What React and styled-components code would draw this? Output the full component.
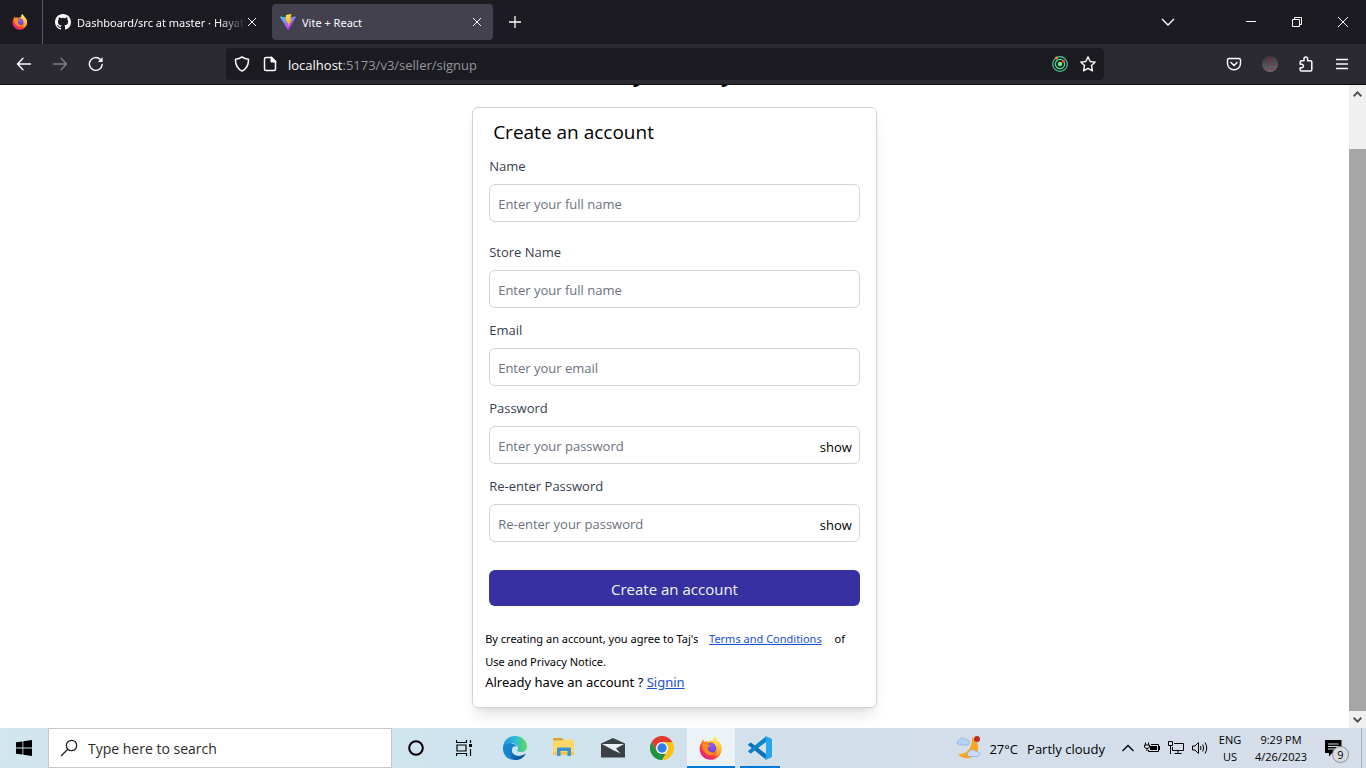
import React, { useState } from "react";
import styled, { createGlobalStyle } from "styled-components";

const GlobalStyle = createGlobalStyle`
  *, *::before, *::after { box-sizing: border-box; }
  html, body, #root { margin: 0; height: 100%; }
  body { font-family: "Open Sans", "Noto Sans", sans-serif; background: #fff; color: #000; overflow: hidden; }
  button, input { font: inherit; color: inherit; }
  button { border: 0; padding: 0; background: none; cursor: pointer; }
  svg { display: block; flex: none; }
`;

const Desktop = styled.div`
  display: flex;
  flex-direction: column;
  height: 100vh;
`;

/* ---------- browser chrome ---------- */
const TabStrip = styled.header`
  display: flex;
  align-items: center;
  height: 44px;
  flex: none;
  background: #1c1b22;
  color: #fbfbfe;
`;
const Pinned = styled.button`
  display: flex;
  align-items: center;
  justify-content: center;
  width: 43px;
  height: 44px;
  padding-right: 2px;
  border-right: 1px solid #5b5b66;
`;
const Tab = styled.div`
  display: flex;
  align-items: center;
  width: ${(p) => (p.$active ? 221 : 225)}px;
  height: 36px;
  margin-right: 4px;
  padding: 0 10px 0 ${(p) => (p.$active ? 8 : 12)}px;
  gap: 6px;
  border-radius: 4px;
  background: ${(p) => (p.$active ? "#42414d" : "transparent")};
  font-family: "Noto Sans", "Open Sans", sans-serif;
  font-size: 11px;
  line-height: 18px;
`;
const TabTitle = styled.span`
  flex: 1;
  min-width: 0;
  padding-top: 2px;
  margin-right: -6px;
  overflow: hidden;
  white-space: nowrap;
  ${(p) => p.$fade && "mask-image: linear-gradient(to right, #000 84%, transparent 100%);"}
`;
const TabClose = styled.button`
  display: flex;
  align-items: center;
  justify-content: center;
  width: 12px;
  height: 20px;
`;
const ChromeButton = styled.button`
  display: flex;
  align-items: center;
  justify-content: center;
  width: ${(p) => p.$w || 36}px;
  height: 36px;
  color: #fbfbfe;
  opacity: ${(p) => (p.disabled ? 0.4 : 1)};
`;
const WindowControls = styled.div`
  display: flex;
  margin-left: auto;
`;
const ListTabs = styled(ChromeButton)`
  margin-right: 42px;
`;
const Toolbar = styled.nav`
  display: flex;
  align-items: center;
  height: 41px;
  flex: none;
  padding: 0 6px;
  background: #2b2a33;
  border-bottom: 1px solid #0c0c0d;
`;
const ToolGroup = styled.div`
  display: flex;
`;
const UrlBar = styled.div`
  display: flex;
  align-items: center;
  flex: 1;
  height: 32px;
  margin: 0 112px;
  padding: 0 8px;
  gap: 10px;
  border-radius: 4px;
  background: #1c1b22;
  color: #fbfbfe;
`;
const UrlIcons = styled.div`
  display: flex;
  gap: 12px;
`;
const Url = styled.span`
  flex: 1;
  padding-top: 2px;
  font-size: 13px;
  line-height: 20px;
  color: #96959d;
  b { font-weight: 400; color: #fbfbfe; }
`;

/* ---------- page ---------- */
const Viewport = styled.div`
  display: flex;
  flex: 1;
  min-height: 0;
`;
const Page = styled.main`
  flex: 1;
  min-width: 0;
  overflow: hidden;
  display: flex;
  flex-direction: column;
  align-items: center;
  justify-content: flex-end;
  padding-bottom: 20px;
`;
const Brand = styled.h1`
  margin: 0 0 18px;
  font-size: 22px;
  line-height: 32px;
  font-weight: 700;
`;
const Card = styled.form`
  flex: none;
  width: 30%;
  min-width: 400px;
  padding: 10px 16px 15px;
  border: 1px solid #d1d5db;
  border-radius: 6px;
  background: #fff;
  box-shadow: 0 10px 15px -3px rgba(0, 0, 0, 0.1), 0 4px 6px -4px rgba(0, 0, 0, 0.1);
`;
const CardTitle = styled.h2`
  margin: 0 0 10px 4px;
  font-size: 19px;
  line-height: 28px;
  font-weight: 400;
`;
const Field = styled.div`
  display: flex;
  flex-direction: column;
  gap: 8px;
  margin-bottom: ${(p) => (p.$spaced ? 20 : 12)}px;
`;
const Label = styled.label`
  font-size: 13px;
  line-height: 20px;
  color: #374151;
`;
const InputShell = styled.div`
  display: flex;
  align-items: center;
  height: 38px;
  padding: 2px 7px 0 8px;
  border: 1px solid #d1d5db;
  border-radius: 6px;
`;
const Input = styled.input`
  flex: 1;
  min-width: 0;
  height: 24px;
  padding: 0;
  border: 0;
  outline: 0;
  background: none;
  font-size: 13px;
  &::placeholder { color: #6b7280; opacity: 1; }
`;
const Reveal = styled.button`
  padding-top: 2px;
  font-size: 13px;
  line-height: 20px;
`;
const Submit = styled.button`
  display: block;
  width: 100%;
  height: 36px;
  margin: 28px 0 21px;
  padding-top: 2px;
  border-radius: 6px;
  background: #3730a3;
  color: #f3f4f6;
  font-size: 15px;
  line-height: 24px;
`;
const Note = styled.p`
  margin: 0 0 0 -4px;
  font-family: "Noto Sans", "Open Sans", sans-serif;
  font-size: ${(p) => (p.$small ? 11 : 13)}px;
  line-height: ${(p) => (p.$small ? 23 : 19)}px;
`;
const TextLink = styled.a`
  color: #1d4ed8;
  text-decoration: underline;
  margin: ${(p) => (p.$wide ? "0 10px 0 8px" : "0")};
`;
const Scrollbar = styled.div`
  display: flex;
  flex-direction: column;
  width: 17px;
  background: #f0f0f0;
`;
const ScrollArrow = styled.button`
  display: flex;
  align-items: center;
  justify-content: center;
  height: 17px;
  flex: none;
`;
const ScrollTrack = styled.div`
  display: grid;
  grid-template-rows: 1fr 12fr;
  flex: 1;
`;
const ScrollThumb = styled.div`
  grid-row: 2;
  background: #a6a6a6;
`;

/* ---------- taskbar ---------- */
const Taskbar = styled.footer`
  display: flex;
  height: 40px;
  flex: none;
  background: linear-gradient(to right, #d0e7ee, #cfe4ee 40%, #d3dfeb 62%, #d5dde9);
`;
const TaskButton = styled.button`
  display: flex;
  align-items: center;
  justify-content: center;
  width: 48px;
  height: 40px;
  background: ${(p) => (p.$active ? "#ebf3f7" : "none")};
  box-shadow: ${(p) => (p.$active ? "inset 0 -2px #0078d7" : "none")};
`;
const OpenTask = styled(TaskButton)`
  width: 40px;
  margin: 0 4px;
  box-shadow: inset 0 -2px #0078d7;
`;
const SearchBox = styled.label`
  display: flex;
  align-items: center;
  gap: 10px;
  width: 344px;
  padding: 0 11px;
  border: 1px solid #c6c8ca;
  background: #fff;
`;
const SearchInput = styled.input`
  flex: 1;
  min-width: 0;
  padding: 0;
  border: 0;
  outline: 0;
  font-size: 14px;
  &::placeholder { color: #2b2b2b; opacity: 1; }
`;
const Apps = styled.div`
  display: flex;
  gap: 1px;
  margin-left: 3px;
`;
const Tray = styled.div`
  display: flex;
  align-items: center;
  margin-left: auto;
  padding-right: 4px;
`;
const Weather = styled.button`
  display: flex;
  align-items: center;
  gap: 9px;
  margin-right: 11px;
  font-size: 13px;
  line-height: 20px;
`;
const WeatherText = styled.span`
  padding-top: 2px;
`;
const TrayButton = styled.button`
  display: flex;
  align-items: center;
  justify-content: center;
  width: 24px;
  height: 40px;
`;
const TrayText = styled.button`
  width: ${(p) => p.$w}px;
  font-size: 11px;
  line-height: 17px;
  text-align: center;
`;
const Notices = styled.button`
  position: relative;
  display: flex;
  align-items: center;
  width: 48px;
  height: 40px;
  padding-left: 11px;
  border-right: 1px solid #a9b3bd;
`;
const Badge = styled.span`
  position: absolute;
  left: 18px;
  top: 18px;
  width: 17px;
  height: 17px;
  border: 1px solid #8a8f94;
  border-radius: 50%;
  background: #d9dcdf;
  font-size: 11px;
  line-height: 15px;
  text-align: center;
`;

/* ---------- icons ---------- */
const Line = ({ w = 16, h = w, box, sw = 1, children, ...rest }) => (
  <svg width={w} height={h} viewBox={box || `0 0 ${w} ${h}`} fill="none" stroke="currentColor" strokeWidth={sw} {...rest}>
    {children}
  </svg>
);

const Firefox = ({ size, id }) => (
  <svg width={size} height={size} viewBox="0 0 24 24">
    <defs>
      <linearGradient id={`${id}a`} x1="0.85" y1="0.1" x2="0.2" y2="0.95">
        <stop offset="0" stopColor="#fff44f" />
        <stop offset="0.35" stopColor="#ffa71f" />
        <stop offset="0.65" stopColor="#ff4b3a" />
        <stop offset="1" stopColor="#e31587" />
      </linearGradient>
      <radialGradient id={`${id}b`} cx="0.6" cy="0.3" r="0.8">
        <stop offset="0" stopColor="#9059ff" />
        <stop offset="1" stopColor="#5b3bc4" />
      </radialGradient>
      <linearGradient id={`${id}c`} x1="0.5" y1="0" x2="0.5" y2="1">
        <stop offset="0" stopColor="#fff36b" />
        <stop offset="1" stopColor="#ff9a20" />
      </linearGradient>
    </defs>
    <path fill={`url(#${id}a)`} d="M2.2 7.2 C2.6 5.6 3.5 4.2 4.3 3.6 C4.4 4.6 4.8 5.3 5.2 5.8 C6.6 5.2 8 5.3 9 5.9 C11 4.5 13.5 4.7 14.2 4.9 C13.8 2.8 14.6 1 16 0 C16.2 2.7 19.3 4.3 21 7 C23.2 10.2 23.4 14.4 21.3 18 C19.3 21.6 15.7 23.8 11.8 23.8 C5.4 23.8 0.5 18.9 0.6 12.5 C0.6 10.6 1.2 8.6 2.2 7.2Z" />
    <circle cx="12" cy="12" r="5.2" fill={`url(#${id}b)`} />
    <path fill={`url(#${id}c)`} d="M14.2 4.9 C13.8 2.8 14.6 1 16 0 C16.2 2.7 19.3 4.3 21 7 C22.8 9.8 22.8 13.6 21 16 C20.6 18.4 17.8 20 15.6 19.8 C18.4 18 19.2 14.6 17.8 11.6 C16.6 9 14.9 8 14.2 4.9Z" />
    <path fill="#ff8a1f" d="M3.4 7.6 C5 5.4 8 5 9 5.9 C8.6 6.8 8.6 7.8 9 8.6 C10 8.9 11.2 8.8 11.8 9 C11.4 10 10 10.2 9.2 11.2 C8.4 12.8 9 14.6 10.6 15.6 C12.4 16.8 14.6 17 16.4 16.4 C14.6 19.6 10 19.8 7 17.4 C4 15 2.8 11.2 3.4 7.6Z" />
  </svg>
);

const Github = () => (
  <svg width="16" height="16" viewBox="0 0 16 16" fill="#fbfbfe">
    <path d="M8 0C3.58 0 0 3.58 0 8c0 3.54 2.29 6.53 5.47 7.59.4.07.55-.17.55-.38 0-.19-.01-.82-.01-1.49-2.01.37-2.53-.49-2.69-.94-.09-.23-.48-.94-.82-1.13-.28-.15-.68-.52-.01-.53.63-.01 1.08.58 1.23.82.72 1.21 1.87.87 2.33.66.07-.52.28-.87.51-1.07-1.78-.2-3.64-.89-3.64-3.95 0-.87.31-1.59.82-2.15-.08-.2-.36-1.02.08-2.12 0 0 .67-.21 2.2.82a7.6 7.6 0 0 1 4 0c1.53-1.04 2.2-.82 2.2-.82.44 1.1.16 1.92.08 2.12.51.56.82 1.27.82 2.15 0 3.07-1.87 3.75-3.65 3.95.29.25.54.73.54 1.48 0 1.07-.01 1.93-.01 2.2 0 .21.15.46.55.38A8 8 0 0 0 16 8c0-4.42-3.58-8-8-8z" />
  </svg>
);

const Vite = () => (
  <svg width="16" height="16" viewBox="0 0 32 32">
    <defs>
      <linearGradient id="viteBody" x1="0" y1="0" x2="0.55" y2="0.9">
        <stop offset="0" stopColor="#41d1ff" />
        <stop offset="1" stopColor="#bd34fe" />
      </linearGradient>
      <linearGradient id="viteBolt" x1="0.4" y1="0" x2="0.6" y2="1">
        <stop offset="0" stopColor="#ffea83" />
        <stop offset="0.1" stopColor="#ffdd35" />
        <stop offset="1" stopColor="#ffa800" />
      </linearGradient>
    </defs>
    <path fill="url(#viteBody)" d="M31.9 6.2 L17 31.3 C16.7 31.9 15.6 31.9 15.3 31.3 L.1 6.2 C-.2 5.6 .3 4.8 1.1 4.9 L16 7.5 L30.9 4.9 C31.7 4.8 32.2 5.5 31.9 6.2Z" />
    <path fill="url(#viteBolt)" d="M23 .1 L12 2.2 L11.2 14 L14.3 13.5 L13.3 18 L16.2 17.3 L15 26.5 L23.7 10.4 L20.2 11Z" />
  </svg>
);

const Cross = ({ s = 10 }) => (
  <Line w={s} sw={1}><path d={`M1 1L${s - 1} ${s - 1}M${s - 1} 1L1 ${s - 1}`} /></Line>
);
const Back = () => (
  <Line sw={1.4} strokeLinecap="round" strokeLinejoin="round"><path d="M14.5 8H1.5M7 2.3L1.5 8L7 13.7" /></Line>
);
const Forward = () => (
  <Line sw={1.4} strokeLinecap="round" strokeLinejoin="round"><path d="M1.5 8H14.5M9 2.3L14.5 8L9 13.7" /></Line>
);
const Reload = () => (
  <Line sw={1.4} strokeLinecap="round">
    <path d="M14.2 8.4A6.4 6.4 0 1 1 12.4 3.5" />
    <path d="M14.6 1.2V6H9.8Z" fill="currentColor" stroke="none" />
  </Line>
);
const Shield = () => (
  <Line sw={1.5} strokeLinejoin="round">
    <path d="M8 .9C9.8 2.3 12 3 14.5 3.2C14.7 8.4 13 12.4 8 15.1C3 12.4 1.3 8.4 1.5 3.2C4 3 6.2 2.3 8 .9Z" />
  </Line>
);
const Doc = () => (
  <Line sw={1.5} strokeLinejoin="round">
    <path d="M9.5 1.5H4Q2.5 1.5 2.5 3V13Q2.5 14.5 4 14.5H12Q13.5 14.5 13.5 13V5.5Z" />
    <path d="M9.3 1.3V5.7H13.7Z" fill="currentColor" />
  </Line>
);
const Radar = () => (
  <svg width="16" height="16" viewBox="0 0 16 16" fill="none" stroke="#42c79b" strokeWidth="1.2">
    <circle cx="8" cy="8" r="7.3" />
    <circle cx="8" cy="8" r="4.6" stroke="#4fe08c" />
    <circle cx="8" cy="8" r="2.2" fill="#62f58b" stroke="none" />
    <circle cx="4.5" cy="1.9" r="1.5" fill="#f58a2c" stroke="none" />
    <circle cx="11.5" cy="5.2" r="1.5" fill="#f0502c" stroke="none" />
  </svg>
);
const Star = () => (
  <Line sw={1.4} strokeLinejoin="round">
    <path d="M8 .9L10.2 5.5L15.2 6.1L11.5 9.6L12.5 14.8L8 12.3L3.5 14.8L4.5 9.6L.8 6.1L5.8 5.5Z" />
  </Line>
);
const Pocket = () => (
  <Line sw={1.4} strokeLinecap="round" strokeLinejoin="round">
    <path d="M3 2.5H13Q14.5 2.5 14.5 4V7.5A6.5 6.3 0 0 1 1.5 7.5V4Q1.5 2.5 3 2.5Z" />
    <path d="M5 6.5L8 9.4L11 6.5" />
  </Line>
);
const DarkOrb = () => (
  <svg width="16" height="16" viewBox="0 0 16 16">
    <defs>
      <linearGradient id="orb" x1="0" y1="0" x2="0.2" y2="1">
        <stop offset="0" stopColor="#34343b" />
        <stop offset="1" stopColor="#65656c" />
      </linearGradient>
    </defs>
    <circle cx="8" cy="8" r="8" fill="url(#orb)" />
    <path d="M4 2Q7 4 9 3M10 3Q6 7 9 8T14 9.5M5 13H7M8 13H12" stroke="#8b2a36" fill="none" />
  </svg>
);
const Puzzle = () => (
  <Line sw={1.5} strokeLinejoin="round">
    <path d="M6 4.7V2.8A1.8 1.8 0 0 1 9.6 2.8V4.7H12.6Q13.8 4.7 13.8 6V13.8Q13.8 15 12.6 15H3.4Q2.2 15 2.2 13.8V11.8H3.6A1.8 1.8 0 0 0 3.6 8.2H2.2V6Q2.2 4.7 3.4 4.7Z" />
  </Line>
);
const Menu = () => (
  <Line w={14} sw={1.4}><path d="M1 2.5H13M1 7H13M1 11.5H13" /></Line>
);

const Windows = () => (
  <svg width="16" height="16" viewBox="0 0 16 16">
    <path d="M0 2.3L6.5 1.4V7.6H0ZM7.3 1.3L16 0V7.6H7.3ZM0 8.4H6.5V14.6L0 13.7ZM7.3 8.4H16V16L7.3 14.7Z" />
  </svg>
);
const Magnifier = () => (
  <Line w={18} sw={1.3} stroke="#222"><circle cx="11.5" cy="6.5" r="5.2" /><path d="M7.8 10.2L1 17" /></Line>
);
const TaskView = () => (
  <Line w={16} h={16} stroke="#000" sw={1.2}>
    <path d="M.5 0V2.5H10.5V0M.5 16V13.5H10.5V16M1 5H10V11H1ZM14.5 0V3M14.5 9V16" />
    <rect x="13" y="4" width="3" height="3" fill="#000" stroke="none" />
  </Line>
);
const Edge = () => (
  <svg width="24" height="24" viewBox="0 0 24 24">
    <defs>
      <linearGradient id="edgeTop" x1="0" y1="0.4" x2="1" y2="0.4">
        <stop offset="0" stopColor="#2593dc" />
        <stop offset="0.5" stopColor="#2bb9d8" />
        <stop offset="1" stopColor="#62dc5c" />
      </linearGradient>
      <linearGradient id="edgeLow" x1="0" y1="0" x2="0.9" y2="1">
        <stop offset="0" stopColor="#1b8fd8" />
        <stop offset="1" stopColor="#0c4a91" />
      </linearGradient>
    </defs>
    <path fill="url(#edgeTop)" d="M0 11C.7 4.5 5.8 0 12 0C19 0 24 5 24 10.5C24 14 21.3 16 18 16C15.5 16 14 15.2 14.2 14.2C14.5 13.5 15 13 15 11.8C14.6 8.5 10.5 6.6 6.8 7C3.5 7.3 1 9 0 11Z" />
    <path fill="#1786d2" d="M0 11C1 8.3 4 6.8 7 7C10.5 7.2 13 8.8 14 10.5C10.5 9.5 8 11.8 8 15C8 19 11 22.5 15.2 23.3C7.5 25.8-.8 20.5 0 11Z" />
    <path fill="url(#edgeLow)" d="M10.3 10.7C8 13.5 8.7 17 11.5 18.8C14.5 20.7 19 20 22 17.7C22.5 17.5 22.7 18 22.4 18.4C20 22 16.5 24 12.5 24C8.5 23 6.3 19.5 6.5 16C6.7 13.3 8 11.5 10.3 10.7Z" />
  </svg>
);
const Explorer = () => (
  <svg width="22" height="20" viewBox="0 0 22 20">
    <path fill="#dfa321" d="M0 1Q0 0 1 0H9L11 2.5H0Z" />
    <path fill="#ffd869" d="M0 3H10L11.5 1.5H20Q21 1.5 21 2.5V17H0Z" />
    <path fill="#f8c64d" d="M0 14H21V17H0Z" />
    <path fill="#3b93d6" d="M4 10.5Q4 9.5 5 9.5H17Q18 9.5 18 10.5V18H14.5V13H7.5V18H4Z" />
  </svg>
);
const Mail = () => (
  <svg width="24" height="20" viewBox="0 0 24 20">
    <path fill="#3b4044" d="M0 5.5L12 0L24 5.5V19.5H0Z" />
    <path fill="#e8f1f5" d="M1 6H23L15 10.5L19.5 15.5L11.5 11.8Z" />
  </svg>
);
const Chrome = () => (
  <svg width="24" height="24" viewBox="0 0 24 24">
    <path fill="#e33b2e" d="M1.6 6A12 12 0 0 1 22.4 6H12L6.8 15Z" />
    <path fill="#fbc116" d="M22.4 6A12 12 0 0 1 12 24L17.2 15L12 6Z" />
    <path fill="#229342" d="M12 24A12 12 0 0 1 1.6 6L6.8 15L12 18H15.5Z" />
    <circle cx="12" cy="12" r="6" fill="#fff" />
    <circle cx="12" cy="12" r="4.7" fill="#2f7de9" />
  </svg>
);
const Code = () => (
  <svg width="24" height="24" viewBox="0 0 24 24">
    <path fill="#0a6fb8" d="M.4 8.2L2 6.7Q2.5 6.3 3.1 6.7L18 18V23.5L.4 9.3Q-.1 8.8.4 8.2Z" />
    <path fill="#0a84cf" d="M.4 15.8L2 17.3Q2.5 17.7 3.1 17.3L18 6V.5L.4 14.7Q-.1 15.2.4 15.8Z" />
    <path fill="#27a5ef" d="M17.2 23.7Q18 24 18.7 23.6L23.3 21.4Q24 21 24 20.2V3.8Q24 3 23.3 2.6L18.7.4Q18 0 17.2.3L18 6V18Z" />
  </svg>
);
const WeatherIcon = () => (
  <svg width="24" height="24" viewBox="0 0 24 24">
    <path fill="#f7a521" d="M16 1C21 5 24 10 21 16C17 23 8 25 2 18C10 19 17 12 16 1Z" />
    <path fill="#b8d2f5" stroke="#86aee4" strokeWidth="0.7" d="M3 9A2.7 2.7 0 0 1 3 4A4 4 0 0 1 10 4A2.6 2.6 0 0 1 12 9Z" />
    <path fill="#c8dcf8" stroke="#86aee4" strokeWidth="0.7" d="M13 20.5A2.7 2.7 0 0 1 13 15.5A4.3 4.3 0 0 1 20 15.5A2.6 2.6 0 0 1 22 20.5Z" />
    <circle cx="21" cy="3" r="3" fill="#c42b1c" />
  </svg>
);
const Battery = () => (
  <Line w={16} h={12} stroke="#000">
    <path d="M7 2.5H14.5V9.5H4.5V8M15.5 4V8M.5 3H5.5V5Q5 6.5 3 6.5Q1 6.5.5 5ZM1.5 .5V3M4.5 .5V3M3 6.5V9" />
    <rect x="6" y="4" width="7" height="4" fill="#000" stroke="none" />
  </Line>
);
const Network = () => (
  <Line w={16} h={14} stroke="#000">
    <path d="M6 2.5H15.5V9.5H4.5V6M10 9.5V12.5M6.5 12.5H13.5M.5.5H4.5V4.5H.5ZM2.5 4.5V13" />
  </Line>
);
const Volume = () => (
  <Line w={16} h={14} stroke="#000">
    <path d="M.5 5H3L6.5 1.5V12.5L3 9H.5ZM8.5 5Q9.5 7 8.5 9M10.7 3.5Q12.7 7 10.7 10.5M13 1.5Q16.5 7 13 12.5" />
  </Line>
);

function PasswordField({ id, label, placeholder }) {
  const [shown, setShown] = useState(false);
  return (
    <Field>
      <Label htmlFor={id}>{label}</Label>
      <InputShell>
        <Input id={id} type={shown ? "text" : "password"} placeholder={placeholder} />
        <Reveal type="button" onClick={() => setShown(!shown)}>{shown ? "hide" : "show"}</Reveal>
      </InputShell>
    </Field>
  );
}

function TextField({ id, label, placeholder, type = "text", spaced }) {
  return (
    <Field $spaced={spaced}>
      <Label htmlFor={id}>{label}</Label>
      <InputShell>
        <Input id={id} type={type} placeholder={placeholder} />
      </InputShell>
    </Field>
  );
}

export default function App() {
  return (
    <Desktop>
      <GlobalStyle />
      <TabStrip>
        <Pinned aria-label="Firefox View"><Firefox size={16} id="ffTab" /></Pinned>
        <Tab>
          <Github />
          <TabTitle $fade>Dashboard/src at master · Hayat</TabTitle>
          <TabClose aria-label="Close tab"><Cross /></TabClose>
        </Tab>
        <Tab $active>
          <Vite />
          <TabTitle>Vite + React</TabTitle>
          <TabClose aria-label="Close tab"><Cross /></TabClose>
        </Tab>
        <ChromeButton aria-label="New tab"><Line w={12} sw={1.3}><path d="M6 0V12M0 6H12" /></Line></ChromeButton>
        <WindowControls>
          <ListTabs aria-label="List all tabs"><Line w={14} h={8} sw={1.4}><path d="M1 1L7 7L13 1" /></Line></ListTabs>
          <ChromeButton $w={46} aria-label="Minimize"><Line w={10}><path d="M0 4.5H10" /></Line></ChromeButton>
          <ChromeButton $w={46} aria-label="Restore"><Line w={10}><path d="M.5 2.5H7.5V9.5H.5ZM2.5 2.5V.5H9.5V7.5H7.5" /></Line></ChromeButton>
          <ChromeButton $w={46} aria-label="Close"><Cross s={12} /></ChromeButton>
        </WindowControls>
      </TabStrip>
      <Toolbar>
        <ToolGroup>
          <ChromeButton aria-label="Back"><Back /></ChromeButton>
          <ChromeButton aria-label="Forward" disabled><Forward /></ChromeButton>
          <ChromeButton aria-label="Reload"><Reload /></ChromeButton>
        </ToolGroup>
        <UrlBar>
          <UrlIcons><Shield /><Doc /></UrlIcons>
          <Url><b>localhost</b>:5173/v3/seller/signup</Url>
          <UrlIcons><Radar /><Star /></UrlIcons>
        </UrlBar>
        <ToolGroup>
          <ChromeButton aria-label="Pocket"><Pocket /></ChromeButton>
          <ChromeButton aria-label="Add-on"><DarkOrb /></ChromeButton>
          <ChromeButton aria-label="Extensions"><Puzzle /></ChromeButton>
          <ChromeButton aria-label="Menu"><Menu /></ChromeButton>
        </ToolGroup>
      </Toolbar>

      <Viewport>
        <Page>
          <Brand>Buy Factory !</Brand>
          <Card onSubmit={(e) => e.preventDefault()}>
            <CardTitle>Create an account</CardTitle>
            <TextField id="name" label="Name" placeholder="Enter your full name" spaced />
            <TextField id="store" label="Store Name" placeholder="Enter your full name" />
            <TextField id="email" label="Email" type="email" placeholder="Enter your email" />
            <PasswordField id="password" label="Password" placeholder="Enter your password" />
            <PasswordField id="repassword" label="Re-enter Password" placeholder="Re-enter your password" />
            <Submit type="submit">Create an account</Submit>
            <Note $small>
              By creating an account, you agree to Taj's <TextLink $wide href="#terms">Terms and Conditions</TextLink> of Use and Privacy Notice.
            </Note>
            <Note>Already have an account ? <TextLink href="#signin">Signin</TextLink></Note>
          </Card>
        </Page>
        <Scrollbar>
          <ScrollArrow aria-label="Scroll up"><Line w={9} h={6} sw={2} stroke="#505050"><path d="M.7 5.2L4.5 1.4L8.3 5.2" /></Line></ScrollArrow>
          <ScrollTrack><ScrollThumb /></ScrollTrack>
          <ScrollArrow aria-label="Scroll down"><Line w={9} h={6} sw={2} stroke="#505050"><path d="M.7.8L4.5 4.6L8.3.8" /></Line></ScrollArrow>
        </Scrollbar>
      </Viewport>

      <Taskbar>
        <TaskButton aria-label="Start"><Windows /></TaskButton>
        <SearchBox>
          <Magnifier />
          <SearchInput aria-label="Search" placeholder="Type here to search" />
        </SearchBox>
        <TaskButton aria-label="Cortana"><Line w={16} sw={2} stroke="#000"><circle cx="8" cy="8" r="6.8" /></Line></TaskButton>
        <TaskButton aria-label="Task view"><TaskView /></TaskButton>
        <Apps>
          <TaskButton aria-label="Edge"><Edge /></TaskButton>
          <TaskButton aria-label="File Explorer"><Explorer /></TaskButton>
          <TaskButton aria-label="Mail"><Mail /></TaskButton>
          <TaskButton aria-label="Chrome"><Chrome /></TaskButton>
          <TaskButton aria-label="Firefox" $active><Firefox size={24} id="ffTask" /></TaskButton>
          <OpenTask aria-label="Visual Studio Code"><Code /></OpenTask>
        </Apps>
        <Tray>
          <Weather><WeatherIcon /><WeatherText>27°C</WeatherText><WeatherText>Partly cloudy</WeatherText></Weather>
          <TrayButton aria-label="Show hidden icons"><Line w={12} h={8} sw={1.3} stroke="#000"><path d="M.5 7L6 1.5L11.5 7" /></Line></TrayButton>
          <TrayButton aria-label="Battery"><Battery /></TrayButton>
          <TrayButton aria-label="Network"><Network /></TrayButton>
          <TrayButton aria-label="Volume"><Volume /></TrayButton>
          <TrayText $w={36}>ENG<br />US</TrayText>
          <TrayText $w={66}>9:29 PM<br />4/26/2023</TrayText>
          <Notices aria-label="Notifications">
            <svg width="17" height="17" viewBox="0 0 17 17"><path d="M0 0H16.5V13H7L4 16.5V13H0Z" /><path d="M3 4H13.5M3 6.5H13.5M3 9H10" stroke="#d5dde9" /></svg>
            <Badge>9</Badge>
          </Notices>
        </Tray>
      </Taskbar>
    </Desktop>
  );
}
